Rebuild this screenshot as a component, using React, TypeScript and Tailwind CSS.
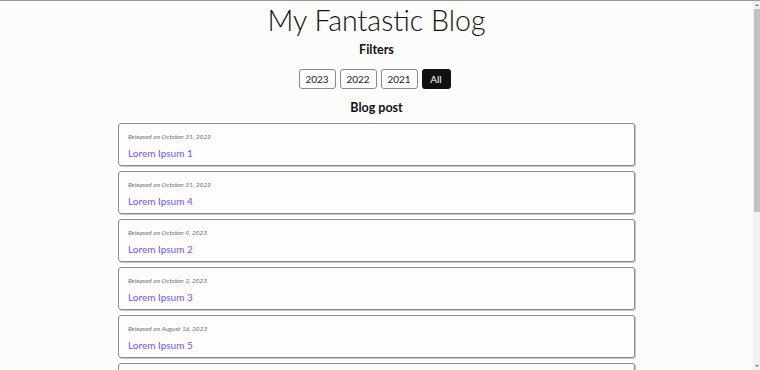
import React from "react";

const posts = [
  { date: "October 31, 2023", title: "Lorem Ipsum 1" },
  { date: "October 31, 2023", title: "Lorem Ipsum 4" },
  { date: "October 9, 2023", title: "Lorem Ipsum 2" },
  { date: "October 2, 2023", title: "Lorem Ipsum 3" },
  { date: "August 16, 2023", title: "Lorem Ipsum 5" },
  { date: "July 3, 2023", title: "Lorem Ipsum 6" },
];

export default function App() {
  return (
    <div
      className="h-[370px] w-[760px] overflow-hidden bg-[#fcfcfa] border-t border-[#9a9a9a] flex"
      style={{ fontFamily: 'Lato, "Open Sans", sans-serif' }}
    >
      <main className="flex-1 flex flex-col items-center">
        <h1 className="text-[28.5px] font-light leading-[36px] mt-[1px] text-[#111]">
          My Fantastic Blog
        </h1>
        <h2 className="text-[12.5px] font-bold leading-[16px] mt-[4px] text-[#111]">Filters</h2>
        <div className="flex gap-[4px] mt-[11px] mr-[4px]">
          {["2023", "2022", "2021"].map((y) => (
            <button
              key={y}
              className="w-[37px] h-[20px] border border-[#8a8a8a] rounded-[3px] bg-[#fdfdfd] text-[10px] text-[#222] flex items-center justify-center"
            >
              {y}
            </button>
          ))}
          <button className="w-[29px] h-[20px] rounded-[3px] bg-[#111] text-[10px] text-white flex items-center justify-center">
            All
          </button>
        </div>
        <h2 className="text-[12.5px] font-bold leading-[16px] mt-[11px] text-[#111]">Blog post</h2>
        <div className="flex flex-col gap-[5px] mt-[7px]">
          {posts.map((p, i) => (
            <div
              key={i}
              className="w-[517px] h-[43px] shrink-0 border border-[#8c8c8c] rounded-[3px] shadow-[1px_1px_0_#c8c8c8] px-[9px] pt-[9px] bg-[#fdfdfc]"
            >
              <div className="text-[6.5px] italic text-[#707070] leading-[8px]">
                Released on {p.date}
              </div>
              <div className="text-[10px] text-[#7b4dff] mt-[6px] leading-[12px]">{p.title}</div>
            </div>
          ))}
        </div>
      </main>
      <div className="w-[7px] h-full bg-[#f0f0f0] flex flex-col items-center">
        <div className="h-[8px] w-full flex items-center justify-center">
          <div className="w-0 h-0 border-l-[2px] border-r-[2px] border-b-[2px] border-l-transparent border-r-transparent border-b-[#777]" />
        </div>
        <div className="w-[6px] h-[203px] bg-[#c2c1c9]" />
        <div className="flex-1" />
        <div className="h-[8px] w-full flex items-center justify-center">
          <div className="w-0 h-0 border-l-[2px] border-r-[2px] border-t-[2px] border-l-transparent border-r-transparent border-t-[#777]" />
        </div>
      </div>
    </div>
  );
}
